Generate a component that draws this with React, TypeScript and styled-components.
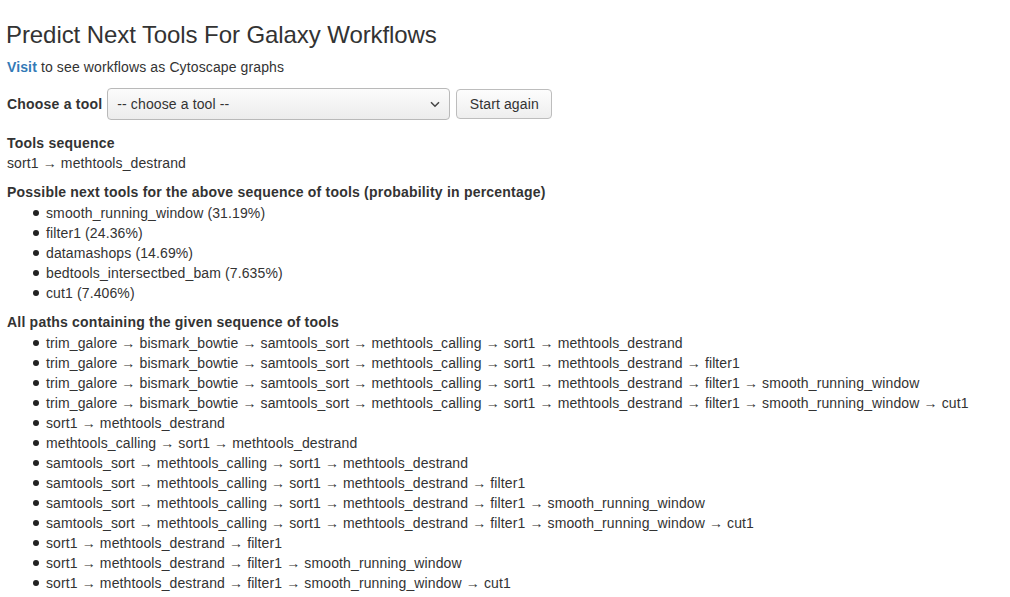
import React from "react";
import styled, { createGlobalStyle } from "styled-components";

const Global = createGlobalStyle`
  html, body { margin: 0; padding: 0; background: #fff; }
  body {
    font-family: "Liberation Sans", Arial, Helvetica, sans-serif;
    font-size: 14px;
    line-height: 20px;
    color: #333;
    letter-spacing: 0.12px;
  }
  * { box-sizing: border-box; }
`;

const Page = styled.div`
  padding: 0 7px;
`;

const Title = styled.h3`
  margin: 22px 0 9px -1px;
  font-size: 24px;
  font-weight: 500;
  line-height: 1.1;
  letter-spacing: -0.08px;
  color: #333;
`;

const Intro = styled.p`
  margin: 0;
`;

const Link = styled.a`
  color: #337ab7;
  font-weight: bold;
  text-decoration: none;
`;

const FormRow = styled.div`
  display: flex;
  align-items: center;
  height: 34px;
  margin-top: 10px;
`;

const Label = styled.label`
  font-weight: bold;
  letter-spacing: 0.21px;
  margin-right: 5px;
`;

const SelectBox = styled.div`
  position: relative;
  width: 343px;
  height: 32px;
  border: 1px solid #b9b9b9;
  border-radius: 4px;
  background: linear-gradient(#fbfbfb, #ececec);
  display: flex;
  align-items: center;
  padding-left: 9px;
  color: #333;
`;

const Chevron = styled.svg`
  position: absolute;
  right: 9px;
  top: 12px;
`;

const Button = styled.button`
  margin-left: 6px;
  height: 30px;
  width: 96px;
  border: 1px solid #bdbdbd;
  border-radius: 4px;
  background: linear-gradient(#fdfdfd, #eeeeee);
  font-family: inherit;
  font-size: 14px;
  letter-spacing: 0.12px;
  color: #333;
  padding: 0;
`;

const Section = styled.section<{ $top: number }>`
  margin-top: ${(p) => p.$top}px;
`;

const Heading = styled.div`
  font-weight: bold;
  letter-spacing: 0.21px;
`;

const Line = styled.div``;

const List = styled.ul`
  margin: 1px 0 0;
  padding-left: 39px;
  list-style: none;
`;

const Item = styled.li`
  &::before {
    content: "";
    display: inline-block;
    width: 6px;
    height: 6px;
    border-radius: 50%;
    background: #222;
    margin-left: -13px;
    margin-right: 7px;
    vertical-align: 2px;
  }
`;

const next = [
  "smooth_running_window (31.19%)",
  "filter1 (24.36%)",
  "datamashops (14.69%)",
  "bedtools_intersectbed_bam (7.635%)",
  "cut1 (7.406%)",
];

const paths = [
  "trim_galore → bismark_bowtie → samtools_sort → methtools_calling → sort1 → methtools_destrand",
  "trim_galore → bismark_bowtie → samtools_sort → methtools_calling → sort1 → methtools_destrand → filter1",
  "trim_galore → bismark_bowtie → samtools_sort → methtools_calling → sort1 → methtools_destrand → filter1 → smooth_running_window",
  "trim_galore → bismark_bowtie → samtools_sort → methtools_calling → sort1 → methtools_destrand → filter1 → smooth_running_window → cut1",
  "sort1 → methtools_destrand",
  "methtools_calling → sort1 → methtools_destrand",
  "samtools_sort → methtools_calling → sort1 → methtools_destrand",
  "samtools_sort → methtools_calling → sort1 → methtools_destrand → filter1",
  "samtools_sort → methtools_calling → sort1 → methtools_destrand → filter1 → smooth_running_window",
  "samtools_sort → methtools_calling → sort1 → methtools_destrand → filter1 → smooth_running_window → cut1",
  "sort1 → methtools_destrand → filter1",
  "sort1 → methtools_destrand → filter1 → smooth_running_window",
  "sort1 → methtools_destrand → filter1 → smooth_running_window → cut1",
];

export default function App() {
  return (
    <Page>
      <Global />
      <Title>Predict Next Tools For Galaxy Workflows</Title>
      <Intro>
        <Link href="#">Visit</Link> to see workflows as Cytoscape graphs
      </Intro>
      <FormRow>
        <Label>Choose a tool</Label>
        <SelectBox>
          -- choose a tool --
          <Chevron width="10" height="7" viewBox="0 0 10 7">
            <path d="M1 1.2 L5 5.2 L9 1.2" fill="none" stroke="#444" strokeWidth="1.5" />
          </Chevron>
        </SelectBox>
        <Button>Start again</Button>
      </FormRow>
      <Section $top={12}>
        <Heading>Tools sequence</Heading>
        <Line>sort1 → methtools_destrand</Line>
      </Section>
      <Section $top={9}>
        <Heading>Possible next tools for the above sequence of tools (probability in percentage)</Heading>
        <List>
          {next.map((t) => (
            <Item key={t}>{t}</Item>
          ))}
        </List>
      </Section>
      <Section $top={9}>
        <Heading>All paths containing the given sequence of tools</Heading>
        <List>
          {paths.map((t) => (
            <Item key={t}>{t}</Item>
          ))}
        </List>
      </Section>
    </Page>
  );
}
